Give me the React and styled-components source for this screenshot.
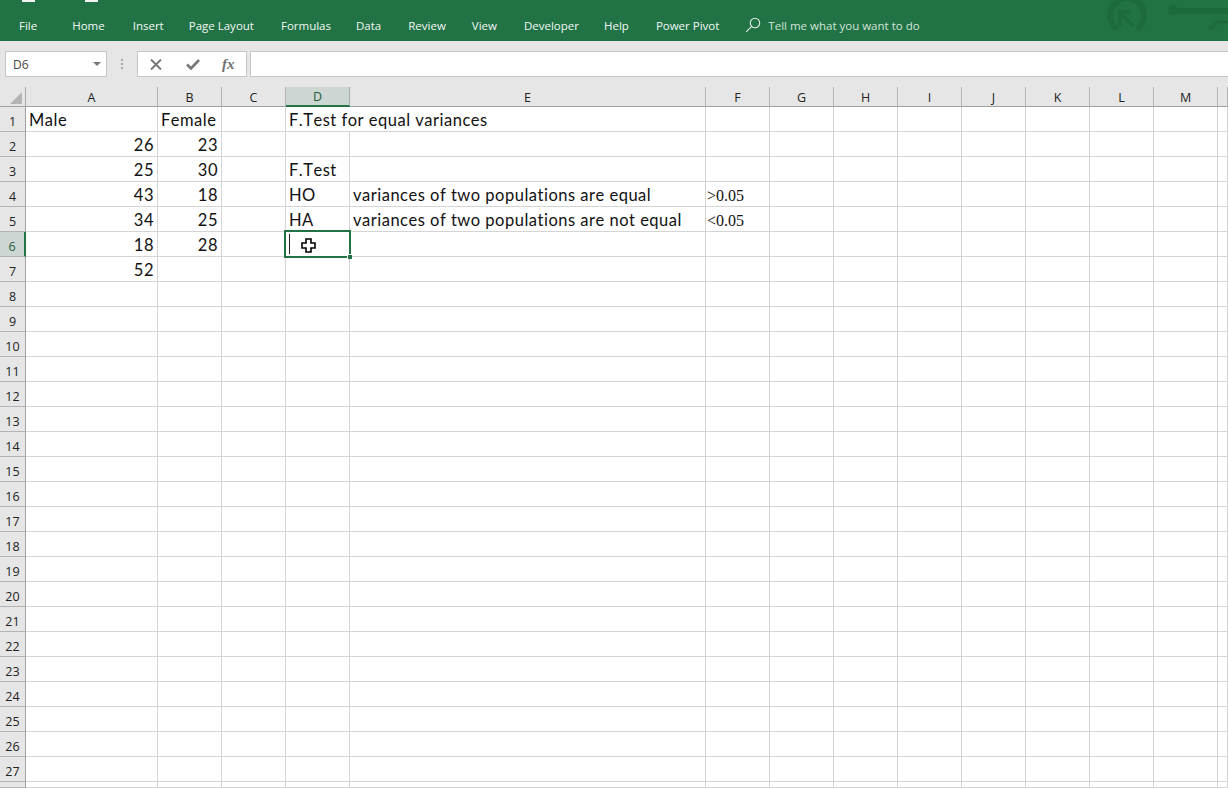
import React from "react";
import styled, { createGlobalStyle } from "styled-components";

const GlobalStyle = createGlobalStyle`
	html, body {
		margin: 0;
		padding: 0;
		height: 100%;
		overflow: hidden;
		background: #fff;
	}
`;

const Page = styled.div`
	width: 1228px;
	height: 788px;
	overflow: hidden;
	display: flex;
	flex-direction: column;
`;

const Ribbon = styled.div`
	position: relative;
	height: 41px;
	flex: none;
	background: #217346;
	overflow: hidden;
`;

const QuickAccess = styled.div`
	display: flex;
	height: 3px;
	padding-left: 22px;
	gap: 50px;
`;

const QuickIcon = styled.div`
	width: 13px;
	height: 2px;
	background: #f2f2f2;
`;

const TabRow = styled.div`
	display: flex;
	align-items: center;
	height: 38px;
	padding: 6px 0 0 19px;
	box-sizing: border-box;
	font: 11.5px "Open Sans", sans-serif;
	color: #f3f7f4;
`;

const Tab = styled.span`
	margin-right: ${props => props.$gap}px;
	white-space: nowrap;
`;

const TellMe = styled.div`
	display: flex;
	align-items: center;
	gap: 7px;
	color: #d3e3d9;
`;

const Watermark = styled.svg`
	position: absolute;
	right: 0;
	top: 0;
`;

const FormulaBar = styled.div`
	height: 46px;
	flex: none;
	display: flex;
	align-items: flex-start;
	padding: 10px 0 0 5px;
	box-sizing: border-box;
	background: #e6e6e6;
`;

const NameBox = styled.div`
	width: 102px;
	height: 26px;
	box-sizing: border-box;
	display: flex;
	align-items: center;
	justify-content: space-between;
	padding: 0 5px 0 7px;
	background: #fff;
	border: 1px solid #c6c6c6;
	font: 12px "Open Sans", sans-serif;
	color: #444;
`;

const Caret = styled.span`
	width: 0;
	height: 0;
	border-left: 4px solid transparent;
	border-right: 4px solid transparent;
	border-top: 4px solid #777;
`;

const Grip = styled.div`
	width: 30px;
	height: 26px;
	flex: none;
	display: flex;
	flex-direction: column;
	align-items: center;
	justify-content: center;
	gap: 2px;

	& > i {
		width: 2px;
		height: 2px;
		background: #a8a8a8;
	}
`;

const FxBox = styled.div`
	width: 110px;
	height: 26px;
	box-sizing: border-box;
	display: flex;
	align-items: center;
	padding-left: 12px;
	gap: 24px;
	background: #fff;
	border: 1px solid #c6c6c6;
`;

const FxLabel = styled.span`
	font: italic bold 15px "Liberation Serif", serif;
	color: #707070;
	margin-left: -2px;
`;

const FormulaInput = styled.div`
	flex: 1;
	height: 26px;
	box-sizing: border-box;
	margin-left: 3px;
	background: #fff;
	border: 1px solid #c6c6c6;
	border-right: 0;
`;

const Sheet = styled.div`
	position: relative;
	display: grid;
	grid-template-columns: 26px 132px 64px 64px 64px 356px repeat(8, 64px) 10px;
	grid-template-rows: 20px repeat(27, 25px) 6px;
	flex: none;
`;

const Corner = styled.div`
	position: relative;
	background: #e6e6e6;
	border-right: 1px solid #a8a8a8;
	border-bottom: 1px solid #a0a0a0;
	box-sizing: border-box;

	&::after {
		content: "";
		position: absolute;
		right: 3px;
		bottom: 2px;
		width: 0;
		height: 0;
		border-left: 12px solid transparent;
		border-bottom: 12px solid #b4b4b4;
	}
`;

const ColHead = styled.div`
	box-sizing: border-box;
	display: flex;
	align-items: center;
	justify-content: center;
	padding-top: 1px;
	background: ${props => (props.$active ? "#cdd6d3" : "#e6e6e6")};
	border-right: 1px solid ${props => (props.$active ? "#a0b0aa" : "#b4b4b4")};
	border-bottom: ${props => (props.$active ? "2px solid #217346" : "1px solid #a0a0a0")};
	font: 12.5px "Open Sans", sans-serif;
	color: ${props => (props.$active ? "#1d5c3a" : "#222")};
`;

const RowHead = styled.div`
	box-sizing: border-box;
	display: flex;
	align-items: center;
	justify-content: center;
	padding-top: 4px;
	background: ${props => (props.$active ? "#cdd6d3" : "#e6e6e6")};
	border-right: ${props => (props.$active ? "2px solid #217346" : "1px solid #a0a0a0")};
	border-bottom: 1px solid #b4b4b4;
	font: 12.5px "Open Sans", sans-serif;
	color: ${props => (props.$active ? "#1d5c3a" : "#222")};
`;

const Cell = styled.div`
	box-sizing: border-box;
	display: flex;
	align-items: center;
	justify-content: ${props => (props.$right ? "flex-end" : "flex-start")};
	padding: ${props => (props.$serif ? "3px" : "1px")} 3px 0 ${props => (props.$serif ? "1px" : "3px")};
	white-space: nowrap;
	font-kerning: none;
	letter-spacing: ${props => (props.$serif ? "0" : "0.5px")};
	border-right: ${props => (props.$spill ? "0" : "1px solid #d4d4d4")};
	border-bottom: 1px solid #d4d4d4;
	font-family: ${props => (props.$serif ? '"Liberation Serif", serif' : "Lato, sans-serif")};
	font-size: ${props => (props.$serif ? "16px" : "16.5px")};
	color: #111;
`;

const Selection = styled.div`
	position: absolute;
	left: 284px;
	top: 143px;
	width: 67px;
	height: 28px;
	box-sizing: border-box;
	border: 2px solid #217346;
	pointer-events: none;

	&::before {
		content: "";
		position: absolute;
		left: 3px;
		top: 2px;
		width: 1px;
		height: 20px;
		background: #222;
	}

	&::after {
		content: "";
		position: absolute;
		right: -3px;
		bottom: -3px;
		width: 5px;
		height: 5px;
		background: #217346;
		border-left: 1px solid #fff;
		border-top: 1px solid #fff;
		box-sizing: border-box;
	}
`;

const Pointer = styled.svg`
	position: absolute;
	left: 301px;
	top: 151px;
`;

const BottomEdge = styled.div`
	height: 1px;
	flex: none;
	background: linear-gradient(to right, #8a8a8a 231px, #fff 231px, #fff 295px, #8a8a8a 295px);
`;

const tabs = [
	["File", 35],
	["Home", 28],
	["Insert", 25],
	["Page Layout", 27],
	["Formulas", 25],
	["Data", 27],
	["Review", 26],
	["View", 27],
	["Developer", 25],
	["Help", 27],
	["Power Pivot", 26],
];

const columns = ["A", "B", "C", "D", "E", "F", "G", "H", "I", "J", "K", "L", "M", ""];

const data = {
	"A1": { text: "Male" },
	"B1": { text: "Female" },
	"D1": { text: "F.Test for equal variances", spill: true },
	"A2": { text: "26", right: true },
	"B2": { text: "23", right: true },
	"A3": { text: "25", right: true },
	"B3": { text: "30", right: true },
	"D3": { text: "F.Test" },
	"A4": { text: "43", right: true },
	"B4": { text: "18", right: true },
	"D4": { text: "HO" },
	"E4": { text: "variances of two populations are equal" },
	"F4": { text: ">0.05", serif: true },
	"A5": { text: "34", right: true },
	"B5": { text: "25", right: true },
	"D5": { text: "HA" },
	"E5": { text: "variances of two populations are not equal" },
	"F5": { text: "<0.05", serif: true },
	"A6": { text: "18", right: true },
	"B6": { text: "28", right: true },
	"A7": { text: "52", right: true },
};

const rows = Array.from({ length: 28 }, (_, i) => i + 1);

export default function App() {
	return (
		<Page>
			<GlobalStyle />
			<Ribbon>
				<QuickAccess>
					<QuickIcon />
					<QuickIcon />
				</QuickAccess>
				<TabRow>
					{tabs.map(([name, gap]) => (
						<Tab key={name} $gap={gap}>{name}</Tab>
					))}
					<TellMe>
						<svg width="16" height="16" viewBox="0 0 16 16" fill="none" stroke="#e4eee8" strokeWidth="1.1">
							<circle cx="10" cy="6" r="4.7" />
							<path d="M6.6 9.4L1.2 14.8" />
						</svg>
						Tell me what you want to do
					</TellMe>
				</TabRow>
				<Watermark width="138" height="41" viewBox="0 0 138 41" fill="none">
					<path d="M47 29A17 17 0 1 0 27 29" stroke="#1c6a3e" strokeWidth="6" />
					<path d="M30 26V12h11M30 12l13 14" stroke="#1c6a3e" strokeWidth="4" />
					<path d="M82 11h56" stroke="#1c6a3e" strokeWidth="6" />
					<circle cx="83" cy="10" r="5" fill="#1c6a3e" />
					<path d="M119 29l9-7h10" stroke="#1c6a3e" strokeWidth="3" />
				</Watermark>
			</Ribbon>
			<FormulaBar>
				<NameBox>
					D6
					<Caret />
				</NameBox>
				<Grip><i /><i /><i /></Grip>
				<FxBox>
					<svg width="12" height="11" viewBox="0 0 12 11" fill="none" stroke="#777" strokeWidth="2">
						<path d="M1 .5l10 10M11 .5L1 10.5" />
					</svg>
					<svg width="14" height="11" viewBox="0 0 14 11" fill="none" stroke="#777" strokeWidth="2.6">
						<path d="M1 5.5l4 4L13 1" />
					</svg>
					<FxLabel>fx</FxLabel>
				</FxBox>
				<FormulaInput />
			</FormulaBar>
			<Sheet>
				<Corner />
				{columns.map((c, i) => (
					<ColHead key={i} $active={c === "D"}>{c}</ColHead>
				))}
				{rows.map(r => (
					<React.Fragment key={r}>
						<RowHead $active={r === 6}>{r < 28 ? r : ""}</RowHead>
						{columns.map((c, i) => {
							const cell = data[c + r];
							return (
								<Cell key={i} $right={cell && cell.right} $spill={cell && cell.spill} $serif={cell && cell.serif}>
									{cell ? cell.text : ""}
								</Cell>
							);
						})}
					</React.Fragment>
				))}
				<Selection />
				<Pointer width="16" height="16" viewBox="0 0 16 16">
					<path d="M5 1h5v4h4v5h-4v4H5v-4H1V5h4z" fill="#fff" stroke="#000" strokeWidth="1.6" />
				</Pointer>
			</Sheet>
			<BottomEdge />
		</Page>
	);
}
